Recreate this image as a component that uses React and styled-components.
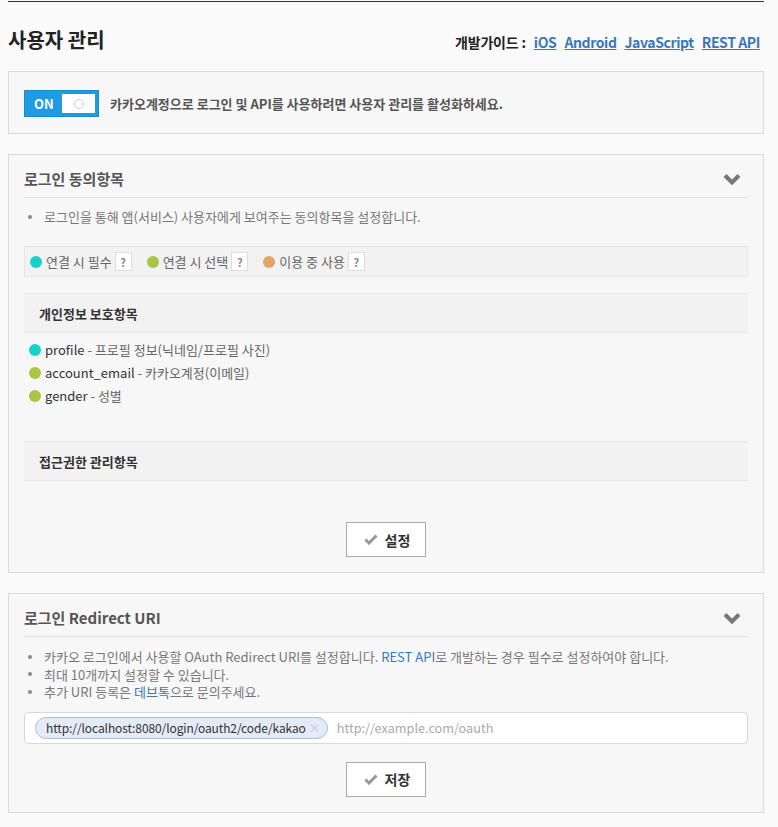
import React from 'react';
import styled, { createGlobalStyle } from 'styled-components';

const Global = createGlobalStyle`
    body {
        margin: 0;
        background: #fafafa;
        font-family: "Noto Sans CJK KR", "Noto Sans", sans-serif;
        color: #333;
    }
    * {
        box-sizing: border-box;
    }
`;

const Page = styled.div`
    width: 756px;
    margin: 1px 0 0 8px;
    border-top: 1px solid #333;
    padding-bottom: 14px;
`;

const Header = styled.div`
    display: flex;
    justify-content: space-between;
    align-items: baseline;
    padding: 26px 4px 19px 0;
`;

const Title = styled.h1`
    margin: 0;
    font-size: 20px;
    line-height: 24px;
    font-weight: 700;
    color: #222;
`;

const Guide = styled.div`
    display: flex;
    gap: 8px;
    font-size: 14px;
    font-weight: 700;
    color: #222;
    letter-spacing: -0.2px;
    a {
        color: #3b78bb;
        text-decoration: underline;
        letter-spacing: -0.4px;
    }
`;

const Panel = styled.section`
    background: #f7f7f7;
    border: 1px solid #dadada;
    padding: 0 15px 15px;
    margin-bottom: 20px;
`;

const SwitchPanel = styled(Panel)`
    display: flex;
    align-items: center;
    gap: 11px;
    height: 63px;
    padding: 2px 15px 0;
`;

const Toggle = styled.div`
    display: flex;
    align-items: center;
    justify-content: space-between;
    width: 75px;
    height: 27px;
    padding: 3px 3px 3px 9px;
    background: #1e9be2;
    border: 1px solid #1a8cd0;
    color: #fff;
    font-size: 13px;
    font-weight: 700;
`;

const Knob = styled.span`
    display: flex;
    align-items: center;
    justify-content: center;
    width: 33px;
    height: 19px;
    background: #fff;
    &::after {
        content: '';
        width: 8px;
        height: 8px;
        border-radius: 50%;
        border: 1px solid #ccc;
    }
`;

const SwitchText = styled.span`
    font-size: 13px;
    font-weight: 700;
    color: #555;
`;

const PanelHead = styled.div`
    display: flex;
    align-items: center;
    justify-content: space-between;
    padding: 12px 7px 6px 0;
    border-bottom: 1px solid #e2e2e2;
`;

const PanelTitle = styled.h2`
    margin: 0;
    font-size: 15px;
    line-height: 24px;
    font-weight: 700;
    color: #555;
`;

const Bullets = styled.ul`
    list-style: none;
    margin: 0;
    padding: ${props => props.pad || '10px 0 0'};
    li {
        position: relative;
        padding-left: 20px;
        font-size: 13px;
        line-height: ${props => props.lh || '18px'};
        color: #777;
    }
    li::before {
        content: '';
        position: absolute;
        left: 4px;
        top: calc(50% - 2px);
        width: 4px;
        height: 4px;
        border-radius: 50%;
        background: #888;
    }
    a {
        color: #3b78bb;
        text-decoration: none;
    }
`;

const Legend = styled.div`
    display: flex;
    align-items: center;
    gap: 15px;
    margin-top: 20px;
    height: 31px;
    padding: 0 5px;
    background: #f2f2f2;
    border: 1px solid #e6e6e6;
`;

const LegendItem = styled.span`
    display: flex;
    align-items: center;
    font-size: 13px;
    color: #666;
`;

const Dot = styled.span`
    display: inline-block;
    width: 12px;
    height: 12px;
    border-radius: 50%;
    margin-right: 4px;
    flex-shrink: 0;
    background: ${props => props.color};
`;

const Help = styled.span`
    display: inline-flex;
    align-items: center;
    justify-content: center;
    width: 17px;
    height: 19px;
    margin-left: 3px;
    background: #fff;
    border: 1px solid #ddd;
    font-size: 11px;
    font-weight: 700;
    color: #888;
`;

const SectionBar = styled.div`
    margin-top: ${props => props.top}px;
    height: 40px;
    display: flex;
    align-items: center;
    padding-left: 15px;
    background: #f2f2f2;
    border-top: 1px solid #e6e6e6;
    border-bottom: 1px solid #e6e6e6;
    font-size: 13px;
    font-weight: 700;
    color: #333;
`;

const Scopes = styled.div`
    padding: 5px 0 0 5px;
`;

const Scope = styled.div`
    display: flex;
    align-items: center;
    font-size: 13px;
    line-height: 23px;
    color: #333;
    span.desc {
        color: #666;
        white-space: pre;
    }
`;

const Actions = styled.div`
    display: flex;
    justify-content: center;
    margin-top: ${props => props.top}px;
`;

const Button = styled.button`
    display: flex;
    align-items: center;
    justify-content: center;
    gap: 7px;
    width: 80px;
    height: 35px;
    padding: 0 0 0 2px;
    background: #fff;
    border: 1px solid #aaa;
    font-family: inherit;
    font-size: 14px;
    font-weight: 700;
    color: #333;
`;

const UriField = styled.div`
    display: flex;
    align-items: center;
    gap: 9px;
    margin-top: 11px;
    height: 32px;
    padding: 0 10px;
    background: #fff;
    border: 1px solid #d8d8d8;
    border-radius: 4px;
`;

const Chip = styled.span`
    display: flex;
    align-items: center;
    gap: 3px;
    height: 22px;
    padding: 0 6px 0 10px;
    background: #e3ebf6;
    border: 1px solid #a9c0de;
    border-radius: 11px;
    font-size: 12px;
    letter-spacing: -0.1px;
    color: #333;
    b {
        font-weight: 400;
        color: #c3c9d2;
        font-size: 12px;
    }
`;

const Placeholder = styled.span`
    font-size: 12.7px;
    color: #aaa;
`;

const Chevron = () => (
    <svg width="18" height="13" viewBox="0 0 18 13">
        <polyline points="2,2.5 9,9.5 16,2.5" fill="none" stroke="#777" strokeWidth="4" />
    </svg>
);

const Check = () => (
    <svg width="14" height="11" viewBox="0 0 14 11">
        <polyline points="1.5,5.5 5,9 12.5,1.5" fill="none" stroke="#999" strokeWidth="3" />
    </svg>
);

const scopes = [
    { color: '#17d2c6', key: 'profile', desc: ' - 프로필 정보(닉네임/프로필 사진)' },
    { color: '#a9c545', key: 'account_email', desc: ' - 카카오계정(이메일)' },
    { color: '#a9c545', key: 'gender', desc: ' - 성별' }
];

export default function App() {
    return (
        <Page>
            <Global />
            <Header>
                <Title>사용자 관리</Title>
                <Guide>
                    <span>개발가이드 :</span>
                    <a href="#ios">iOS</a>
                    <a href="#android">Android</a>
                    <a href="#js">JavaScript</a>
                    <a href="#rest">REST API</a>
                </Guide>
            </Header>

            <SwitchPanel>
                <Toggle>
                    ON
                    <Knob />
                </Toggle>
                <SwitchText>카카오계정으로 로그인 및 API를 사용하려면 사용자 관리를 활성화하세요.</SwitchText>
            </SwitchPanel>

            <Panel>
                <PanelHead>
                    <PanelTitle>로그인 동의항목</PanelTitle>
                    <Chevron />
                </PanelHead>
                <Bullets>
                    <li>로그인을 통해 앱(서비스) 사용자에게 보여주는 동의항목을 설정합니다.</li>
                </Bullets>
                <Legend>
                    <LegendItem>
                        <Dot color="#17d2c6" />연결 시 필수<Help>?</Help>
                    </LegendItem>
                    <LegendItem>
                        <Dot color="#a9c545" />연결 시 선택<Help>?</Help>
                    </LegendItem>
                    <LegendItem>
                        <Dot color="#e2a466" />이용 중 사용<Help>?</Help>
                    </LegendItem>
                </Legend>
                <SectionBar top={16}>개인정보 보호항목</SectionBar>
                <Scopes>
                    {scopes.map(s => (
                        <Scope key={s.key}>
                            <Dot color={s.color} />
                            {s.key}
                            <span className="desc">{s.desc}</span>
                        </Scope>
                    ))}
                </Scopes>
                <SectionBar top={34}>접근권한 관리항목</SectionBar>
                <Actions top={41}>
                    <Button>
                        <Check />
                        설정
                    </Button>
                </Actions>
            </Panel>

            <Panel>
                <PanelHead>
                    <PanelTitle>로그인 Redirect URI</PanelTitle>
                    <Chevron />
                </PanelHead>
                <Bullets pad="11px 0 0" lh="17.5px">
                    <li>
                        카카오 로그인에서 사용할 OAuth Redirect URI를 설정합니다. <a href="#rest">REST API</a>로
                        개발하는 경우 필수로 설정하여야 합니다.
                    </li>
                    <li>최대 10개까지 설정할 수 있습니다.</li>
                    <li>
                        추가 URI 등록은 <a href="#devtalk">데브톡</a>으로 문의주세요.
                    </li>
                </Bullets>
                <UriField>
                    <Chip>
                        http://localhost:8080/login/oauth2/code/kakao <b>×</b>
                    </Chip>
                    <Placeholder>http://example.com/oauth</Placeholder>
                </UriField>
                <Actions top={18}>
                    <Button>
                        <Check />
                        저장
                    </Button>
                </Actions>
            </Panel>
        </Page>
    );
}
